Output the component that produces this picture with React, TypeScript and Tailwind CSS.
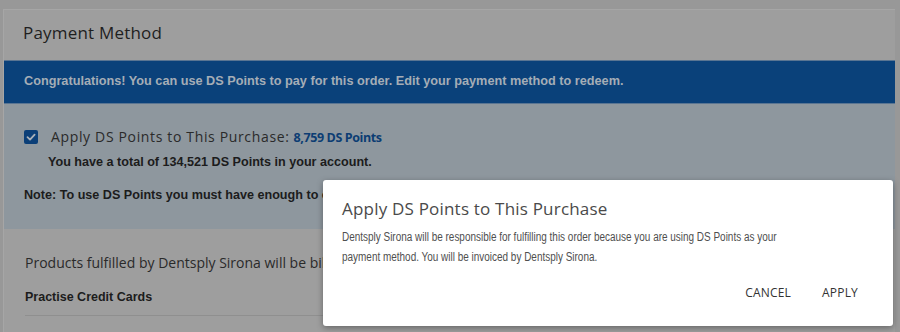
import React from 'react';

const heading = { fontFamily: '"Open Sans", "Noto Sans", sans-serif' };
const arial = { fontFamily: '"Liberation Sans", Arial, sans-serif' };

const CheckIcon = () => (
    <svg viewBox="0 0 14 14" className="w-[14px] h-[14px]">
        <rect x="0" y="0" width="14" height="14" rx="2" fill="#0b3f78" />
        <path d="M3.5 7.2 L6 9.6 L10.6 4.6" stroke="#a8b0b9" strokeWidth="1.8" fill="none" strokeLinecap="round" strokeLinejoin="round" />
    </svg>
);

const ApplyPointsModal: React.FC = () => (
    <div className="absolute left-[323px] top-[180px] w-[570px] h-[146px] bg-white rounded-[3px] shadow-[0_2px_6px_rgba(0,0,0,0.35)] px-[19px] pt-[18px]">
        <h2 className="text-[17px] leading-[22px] text-[#4a4a4a] tracking-[0.2px]" style={heading}>Apply DS Points to This Purchase</h2>
        {/* body copy is a condensed face in the original */}
        <p className="mt-[7px] w-[530px] origin-left scale-x-[0.83] text-[12px] leading-[20px] text-[#4f4f4f]" style={arial}>
            Dentsply Sirona will be responsible for fulfilling this order because you are using DS Points as your
            payment method. You will be invoiced by Dentsply Sirona.
        </p>
        <div className="flex justify-end gap-[31px] pr-[16px] mt-[17px]">
            <button className="text-[12px] text-[#333] tracking-[0.2px]" style={heading}>CANCEL</button>
            <button className="text-[12px] text-[#333] tracking-[0.2px]" style={heading}>APPLY</button>
        </div>
    </div>
);

export default function App() {
    return (
        <div className="relative w-[900px] h-[332px] overflow-hidden bg-[#989898] pt-[9px] pl-[3px] pr-[5px]">
            <div className="bg-[#9e9e9e] border-l border-t border-[#a6a6a6] h-full">
                <div className="h-[50px] flex items-center px-[19px] pb-[4px]">
                    <h1 className="text-[17px] text-[#1f1f1f] tracking-[0.2px]" style={heading}>Payment Method</h1>
                </div>
                <div className="h-[44px] bg-[#0a417a] border-y border-[#5a7592] flex items-center px-[20px]">
                    <p className="text-[12.7px] font-bold text-[#a5adb6]" style={arial}>
                        Congratulations! You can use DS Points to pay for this order. Edit your payment method to redeem.
                    </p>
                </div>
                <div className="h-[125px] bg-[#8e979e] px-[20px] pt-[25px]">
                    <div className="flex items-center gap-[13px] h-[16px]">
                        <CheckIcon />
                        <span className="text-[14px] text-[#2a2a2a] tracking-[0.65px]" style={heading}>
                            Apply DS Points to This Purchase:
                            <span className="ml-[4px] text-[12.5px] font-bold tracking-[-0.4px] text-[#0c3d73]">8,759 DS Points</span>
                        </span>
                    </div>
                    <p className="mt-[8px] ml-[24px] text-[12.6px] font-bold text-[#1c1c1c]" style={arial}>
                        You have a total of 134,521 DS Points in your account.
                    </p>
                    <p className="mt-[14px] text-[12.6px] font-bold text-[#1c1c1c]" style={arial}>
                        Note: To use DS Points you must have enough to cover the full order total.
                    </p>
                </div>
                <div className="px-[21px] pt-[23px]">
                    <p className="text-[14px] text-[#2a2a2a]" style={heading}>
                        Products fulfilled by Dentsply Sirona will be billed to the card below.
                    </p>
                    <p className="mt-[15px] text-[12.5px] font-bold text-[#1c1c1c]" style={arial}>Practise Credit Cards</p>
                    <div className="mt-[8px] border-t border-[#8f8f8f]" />
                </div>
            </div>
            <ApplyPointsModal />
        </div>
    );
}
